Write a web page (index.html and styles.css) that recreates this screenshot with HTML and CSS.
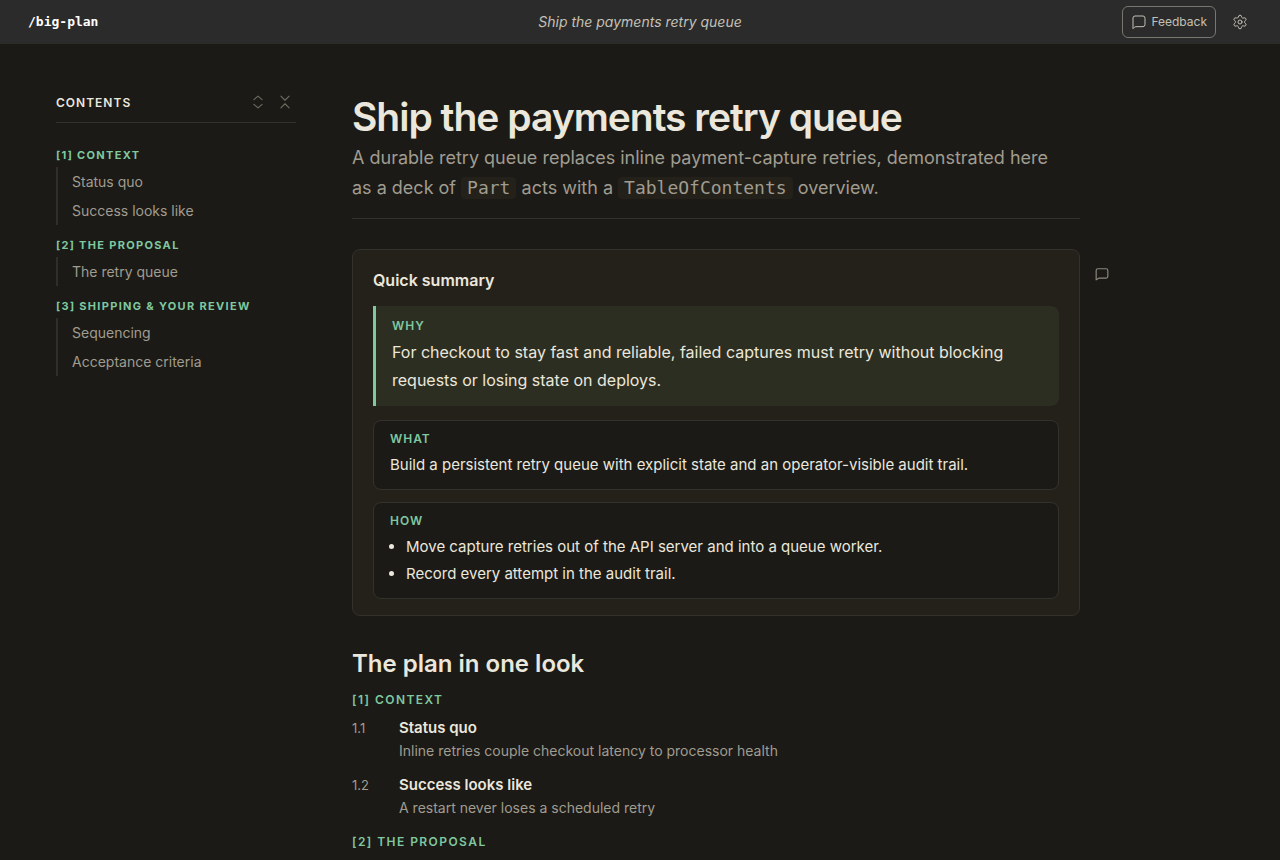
FILE: index.html
```html
<!DOCTYPE html>
<html lang="en">
<head>
  <meta charset="UTF-8">
  <meta name="viewport" content="width=device-width, initial-scale=1.0">
  <title>Ship the payments retry queue</title>
  <link rel="stylesheet" href="styles.css">
</head>
<body>
  <header class="topbar">
    <a class="brand" href="#">/big-plan</a>
    <span class="doc-title">Ship the payments retry queue</span>
    <div class="actions">
      <button class="feedback-btn" type="button">
        <svg width="16" height="16" viewBox="0 0 24 24"><path d="M21 16a3 3 0 0 1-3 3H7.500a4 4 0 0 0-2.500 1L3 22V6a3 3 0 0 1 3-3h12a3 3 0 0 1 3 3z"/></svg>
        Feedback
      </button>
      <button class="icon-btn" type="button" aria-label="Settings">
        <svg width="16" height="16" viewBox="0 0 24 24"><path d="M9.700 4.100a2.300 2.300 0 0 1 4.600 0 2.300 2.300 0 0 0 3.300 1.900 2.300 2.300 0 0 1 2.300 4 2.300 2.300 0 0 0 0 3.900 2.300 2.300 0 0 1-2.300 4 2.300 2.300 0 0 0-3.300 2 2.300 2.300 0 0 1-4.600 0 2.300 2.300 0 0 0-3.300-2 2.300 2.300 0 0 1-2.300-4 2.300 2.300 0 0 0 0-3.900 2.300 2.300 0 0 1 2.300-4 2.300 2.300 0 0 0 3.300-1.900"/><circle cx="12" cy="12" r="3"/></svg>
      </button>
    </div>
  </header>

  <div class="layout">
    <nav class="toc" aria-label="Contents">
      <div class="toc-head">
        <h2>Contents</h2>
        <button class="icon-btn" type="button" aria-label="Expand all">
          <svg width="14" height="14" viewBox="0 0 24 24"><path d="m5 8 7-6 7 6M5 16l7 6 7-6"/></svg>
        </button>
        <button class="icon-btn" type="button" aria-label="Collapse all">
          <svg width="14" height="14" viewBox="0 0 24 24"><path d="m5 2 7 7 7-7M5 22l7-7 7 7"/></svg>
        </button>
      </div>
      <h3>[1] Context</h3>
      <ul>
        <li><a href="#status-quo">Status quo</a></li>
        <li><a href="#success">Success looks like</a></li>
      </ul>
      <h3>[2] The proposal</h3>
      <ul>
        <li><a href="#retry-queue">The retry queue</a></li>
      </ul>
      <h3>[3] Shipping &amp; your review</h3>
      <ul>
        <li><a href="#sequencing">Sequencing</a></li>
        <li><a href="#acceptance">Acceptance criteria</a></li>
      </ul>
    </nav>

    <main>
      <h1>Ship the payments retry queue</h1>
      <p class="lead">A durable retry queue replaces inline payment-capture retries, demonstrated here as a deck of <code>Part</code> acts with a <code>TableOfContents</code> overview.</p>

      <section class="summary">
        <button class="comment-btn" type="button" aria-label="Comment">
          <svg width="14" height="14" viewBox="0 0 24 24"><path d="M22 16a3 3 0 0 1-3 3H7.500a4 4 0 0 0-2.500 1L2 22V6a3 3 0 0 1 3-3h14a3 3 0 0 1 3 3z"/></svg>
        </button>
        <h2>Quick summary</h2>
        <div class="box why">
          <h3>Why</h3>
          <p>For checkout to stay fast and reliable, failed captures must retry without blocking requests or losing state on deploys.</p>
        </div>
        <div class="box">
          <h3>What</h3>
          <p>Build a persistent retry queue with explicit state and an operator-visible audit trail.</p>
        </div>
        <div class="box">
          <h3>How</h3>
          <ul>
            <li>Move capture retries out of the API server and into a queue worker.</li>
            <li>Record every attempt in the audit trail.</li>
          </ul>
        </div>
      </section>

      <section class="overview">
        <h2>The plan in one look</h2>
        <h3>[1] Context</h3>
        <div class="entry" id="status-quo">
          <span class="num">1.1</span>
          <div>
            <h4>Status quo</h4>
            <p>Inline retries couple checkout latency to processor health</p>
          </div>
        </div>
        <div class="entry" id="success">
          <span class="num">1.2</span>
          <div>
            <h4>Success looks like</h4>
            <p>A restart never loses a scheduled retry</p>
          </div>
        </div>
        <h3>[2] The proposal</h3>
      </section>
    </main>
  </div>
</body>
</html>
```
FILE: styles.css
```css
* {
  box-sizing: border-box;
}
body {
  margin: 0;
  font-family: Inter, sans-serif;
  font-size: 16px;
  color: #ebe7dc;
  background-color: #1b1a16;
}
h1, h2, h3, h4, p, ul {
  margin: 0;
  padding: 0;
}
svg {
  display: block;
  fill: none;
  stroke: currentColor;
  stroke-width: 2;
  stroke-linecap: round;
  stroke-linejoin: round;
}
button {
  font-family: inherit;
  color: inherit;
  background: none;
  border: none;
  padding: 0;
  cursor: pointer;
}

/* top bar */
.topbar {
  display: grid;
  grid-template-columns: 1fr auto 1fr;
  align-items: center;
  height: 44px;
  padding: 0 28px;
  background-color: #2b2b2b;
  border-bottom: 1px solid #2d2d27;
}
.brand {
  font-family: "DejaVu Sans Mono", monospace;
  font-size: 13px;
  font-weight: bold;
  color: #ffffff;
  text-decoration: none;
}
.doc-title {
  font-size: 14px;
  font-style: italic;
  color: #c4c0b5;
}
.actions {
  display: flex;
  justify-content: flex-end;
  align-items: center;
  gap: 12px;
  color: #c4c0b5;
}
.feedback-btn {
  display: flex;
  align-items: center;
  gap: 4px;
  height: 32px;
  padding: 0 8px;
  font-size: 12px;
  border: 1px solid #77766f;
  border-radius: 6px;
}
.actions svg {
  stroke-width: 1.5;
}
.icon-btn {
  padding: 4px;
}

/* contents */
.layout {
  display: grid;
  grid-template-columns: 240px minmax(0, 728px);
  gap: 56px;
  padding: 50px 56px;
}
.toc-head {
  display: flex;
  align-items: center;
  gap: 5px;
  height: 29px;
  margin-bottom: 24px;
  padding-bottom: 12px;
  border-bottom: 1px solid #33322c;
  color: #6c695f;
}
.toc-head h2 {
  flex: 1;
  font-size: 12px;
  font-weight: 600;
  letter-spacing: 1px;
  text-transform: uppercase;
  color: #ebe7dc;
}
.toc h3 {
  margin-bottom: 4px;
  font-size: 11px;
  line-height: 16px;
  font-weight: 700;
  letter-spacing: 0.12em;
  text-transform: uppercase;
  color: #7fc8a0;
}
.toc ul {
  margin-bottom: 12px;
  padding-left: 14px;
  list-style: none;
  border-left: 2px solid #2f2e29;
}
.toc li {
  font-size: 14px;
  line-height: 29px;
}
.toc a {
  color: #a09c90;
  text-decoration: none;
}

/* document */
h1 {
  font-size: 39px;
  line-height: 46px;
  font-weight: 600;
  letter-spacing: -1px;
}
.lead {
  margin-bottom: 30px;
  padding: 3px 16px 15px 0;
  font-size: 18px;
  line-height: 30px;
  color: #a09c90;
  border-bottom: 1px solid #33322c;
}
.lead code {
  display: inline-block;
  padding: 0 6px;
  font-family: "DejaVu Sans Mono", monospace;
  font-size: 18px;
  line-height: 22px;
  background-color: #23211a;
  border-radius: 4px;
}
.summary {
  position: relative;
  padding: 16px 20px;
  background-color: #24211a;
  border: 1px solid #33322a;
  border-radius: 8px;
}
.comment-btn {
  position: absolute;
  top: 17px;
  right: -30px;
  color: #8c887d;
}
.summary h2 {
  margin-bottom: 12px;
  font-size: 16px;
  line-height: 28px;
  font-weight: 600;
}
.box {
  margin-top: 12px;
  padding: 8px 16px 11px;
  background-color: #1b1a16;
  border: 1px solid #33322a;
  border-radius: 8px;
}
.box h3, .overview h3 {
  font-size: 12px;
  line-height: 20px;
  font-weight: 600;
  text-transform: uppercase;
  color: #7fc8a0;
}
.box h3 {
  margin-bottom: 2px;
  letter-spacing: 1px;
}
.box p, .box li {
  font-size: 15px;
  line-height: 27px;
}
.box ul {
  padding-left: 16px;
}
.why {
  margin-bottom: 14px;
  padding: 10px 16px 12px;
  background-color: #2c2e21;
  border: none;
  border-left: 3px solid #7fc8a0;
  border-radius: 0 8px 8px 0;
}
.why p {
  font-size: 16px;
  line-height: 28px;
}
.overview {
  margin-top: 30px;
}
.overview h2 {
  font-size: 24px;
  line-height: 36px;
  font-weight: 600;
}
.overview h3 {
  margin-top: 8px;
  letter-spacing: 0.12em;
}
.entry {
  display: grid;
  grid-template-columns: 47px 1fr;
  align-items: baseline;
  padding: 6px 0;
}
.num {
  font-size: 13px;
  color: #a09c90;
}
.entry h4 {
  font-size: 15px;
  line-height: 24px;
  font-weight: 600;
}
.entry p {
  font-size: 14px;
  line-height: 21px;
  color: #a09c90;
}
```
